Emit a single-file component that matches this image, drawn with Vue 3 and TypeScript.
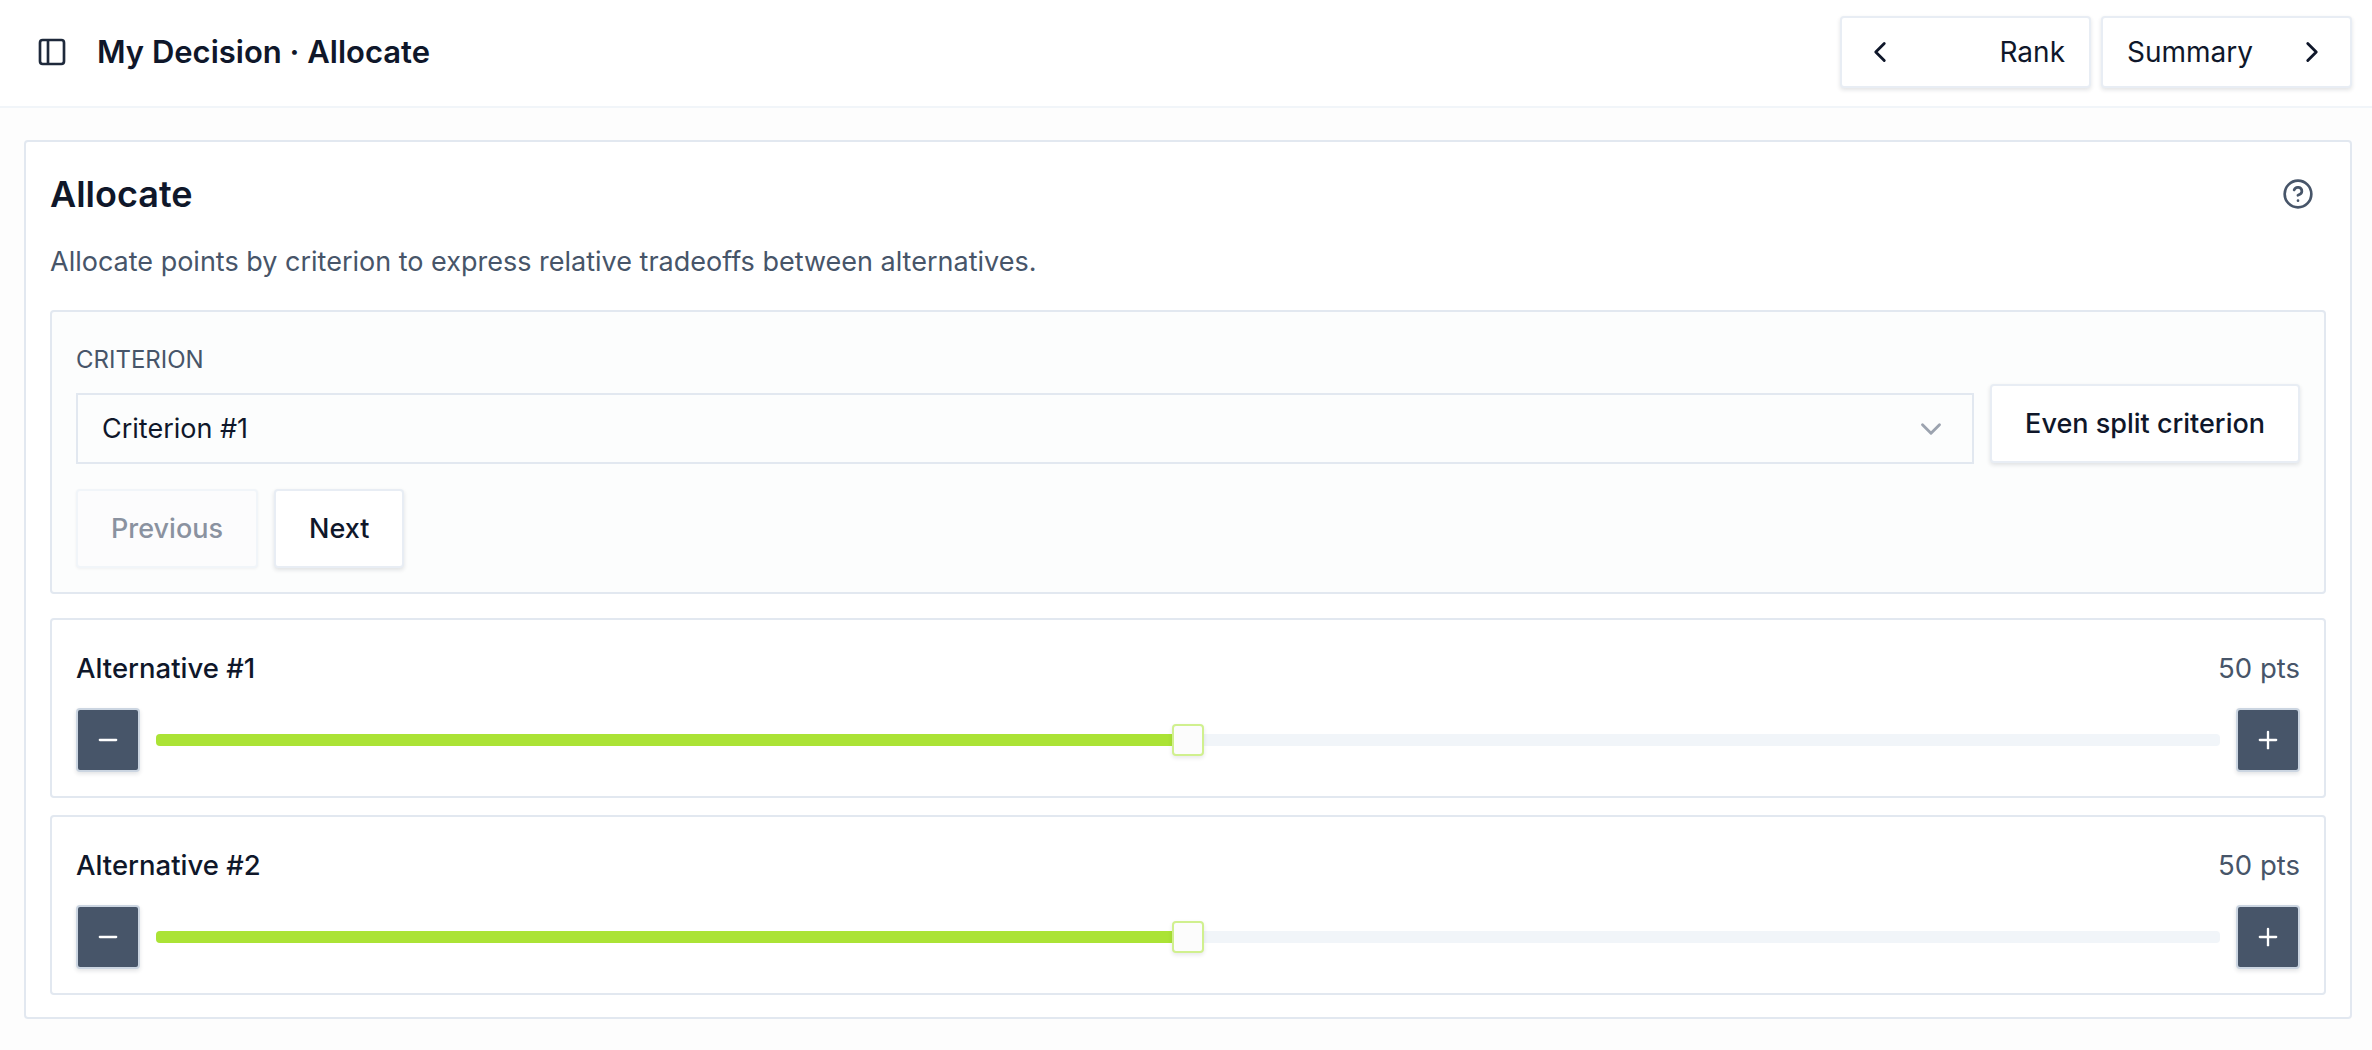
<script setup lang="ts">
interface Alternative {
  name: string
  points: number
}

const alternatives: Alternative[] = [
  { name: 'Alternative #1', points: 50 },
  { name: 'Alternative #2', points: 50 },
]
</script>

<template>
  <div class="page">
    <!-- Top bar -->
    <header class="topbar">
      <div class="topbar-left">
        <svg class="sidebar-icon" viewBox="0 0 24 24" fill="none" stroke="currentColor" stroke-width="2">
          <rect x="3" y="3" width="18" height="18" rx="2" />
          <path d="M9 3v18" />
        </svg>
        <h1 class="page-title">My Decision · Allocate</h1>
      </div>
      <nav class="topbar-nav">
        <button class="btn nav-btn">
          <svg class="chev" viewBox="0 0 24 24" fill="none" stroke="currentColor" stroke-width="2" stroke-linecap="round" stroke-linejoin="round">
            <path d="m15 18-6-6 6-6" />
          </svg>
          <span>Rank</span>
        </button>
        <button class="btn nav-btn">
          <span>Summary</span>
          <svg class="chev" viewBox="0 0 24 24" fill="none" stroke="currentColor" stroke-width="2" stroke-linecap="round" stroke-linejoin="round">
            <path d="m9 18 6-6-6-6" />
          </svg>
        </button>
      </nav>
    </header>

    <main class="content">
      <section class="card">
        <div class="card-head">
          <h2 class="card-title">Allocate</h2>
          <svg class="help-icon" viewBox="0 0 24 24" fill="none" stroke="currentColor" stroke-width="2" stroke-linecap="round" stroke-linejoin="round">
            <circle cx="12" cy="12" r="10" />
            <path d="M9.09 9a3 3 0 0 1 5.83 1c0 2-3 3-3 3" />
            <path d="M12 17h.01" />
          </svg>
        </div>
        <p class="card-desc">Allocate points by criterion to express relative tradeoffs between alternatives.</p>

        <!-- Criterion picker -->
        <div class="panel panel-tint">
          <div class="field-label">CRITERION</div>
          <div class="select-row">
            <div class="select">
              <span>Criterion #1</span>
              <svg class="select-chev" viewBox="0 0 24 24" fill="none" stroke="currentColor" stroke-width="2" stroke-linecap="round" stroke-linejoin="round">
                <path d="m6 9 6 6 6-6" />
              </svg>
            </div>
            <button class="btn action-btn">Even split criterion</button>
          </div>
          <div class="pager">
            <button class="btn action-btn disabled">Previous</button>
            <button class="btn action-btn">Next</button>
          </div>
        </div>

        <!-- Sliders -->
        <div class="alt-list">
          <div v-for="alt in alternatives" :key="alt.name" class="panel alt">
            <div class="alt-head">
              <span class="alt-name">{{ alt.name }}</span>
              <span class="alt-points">{{ alt.points }} pts</span>
            </div>
            <div class="alt-controls">
              <button class="step-btn">
                <svg viewBox="0 0 24 24" fill="none" stroke="currentColor" stroke-width="2" stroke-linecap="round">
                  <path d="M5 12h14" />
                </svg>
              </button>
              <div class="track">
                <div class="track-fill" :style="{ width: alt.points + '%' }"></div>
                <div class="thumb" :style="{ left: alt.points + '%' }"></div>
              </div>
              <button class="step-btn">
                <svg viewBox="0 0 24 24" fill="none" stroke="currentColor" stroke-width="2" stroke-linecap="round">
                  <path d="M5 12h14" />
                  <path d="M12 5v14" />
                </svg>
              </button>
            </div>
          </div>
        </div>
      </section>
    </main>
  </div>
</template>

<style>
html,
body {
  margin: 0;
  background: #fdfdfd;
}
</style>

<style scoped>
.page {
  min-height: 1050px;
  font-family: Inter, "Liberation Sans", sans-serif;
  color: #0f172a;
  background: #fdfdfd;
}

/* Top bar */
.topbar {
  height: 104px;
  box-sizing: content-box;
  display: flex;
  align-items: center;
  justify-content: space-between;
  padding: 0 20px 2px 36px;
  background: #fff;
  border-bottom: 2px solid #f1f5f9;
}

.topbar-left {
  display: flex;
  align-items: center;
  gap: 29px;
}

.sidebar-icon {
  width: 32px;
  height: 32px;
  color: #1e293b;
}

.page-title {
  margin: 0 0 2px;
  font-size: 31px;
  font-weight: 600;
}

.topbar-nav {
  display: flex;
  gap: 10px;
}

.btn {
  font-family: inherit;
  color: #0f172a;
  background: #fff;
  border: 2px solid #e8edf4;
  border-radius: 4px;
  box-shadow: 0 2px 4px rgba(15, 23, 42, 0.12);
}

.nav-btn {
  width: 251px;
  height: 72px;
  padding: 0 24px;
  display: flex;
  align-items: center;
  justify-content: space-between;
  font-size: 28px;
  font-weight: 400;
}

.chev {
  width: 34px;
  height: 34px;
  margin: 0 -3px;
}

/* Main card */
.content {
  padding: 32px 20px 32px 24px;
}

.card {
  border: 2px solid #e2e8f0;
  border-radius: 4px;
  padding: 28px 24px 22px;
  background: #fff;
  display: flex;
  flex-direction: column;
  gap: 24px;
}

.card-head {
  display: flex;
  align-items: center;
  justify-content: space-between;
  height: 48px;
}

.card-title {
  margin: 0;
  font-size: 36px;
  font-weight: 600;
}

.help-icon {
  width: 32px;
  height: 32px;
  margin-right: 12px;
  color: #475569;
}

.card-desc {
  margin: 0 0 4px;
  font-size: 27px;
  color: #475569;
  line-height: 40px;
}

.panel {
  border: 2px solid #e2e8f0;
  border-radius: 4px;
  padding: 24px;
}

.panel-tint {
  background: #fcfdfd;
}

.field-label {
  font-size: 24px;
  color: #475569;
  line-height: 32px;
  margin-top: 8px;
}

.select-row {
  display: flex;
  align-items: flex-start;
  gap: 16px;
  margin-top: 8px;
}

.select {
  flex: 1;
  height: 71px;
  margin-top: 9px;
  box-sizing: border-box;
  border: 2px solid #e2e8f0;
  display: flex;
  align-items: center;
  justify-content: space-between;
  padding: 0 24px;
  font-size: 27px;
}

.select-chev {
  width: 34px;
  height: 34px;
  color: #9ca3af;
}

.action-btn {
  height: 79px;
  padding: 0 33px;
  font-size: 27px;
  font-weight: 500;
}

.pager {
  display: flex;
  gap: 16px;
  margin-top: 25px;
}

.disabled {
  color: #8a92a0;
  background: #fcfcfd;
  border-color: #f1f5f9;
  box-shadow: 0 1px 3px rgba(15, 23, 42, 0.05);
}

/* Alternative sliders */
.alt-list {
  display: flex;
  flex-direction: column;
  gap: 17px;
}

.alt {
  background: #fff;
}

.alt-head {
  display: flex;
  justify-content: space-between;
  align-items: center;
  line-height: 40px;
  font-size: 27.5px;
  margin-top: 4px;
}

.alt-name {
  font-weight: 500;
}

.alt-points {
  color: #475569;
}

.alt-controls {
  display: flex;
  align-items: center;
  gap: 16px;
  margin-top: 20px;
}

.step-btn {
  width: 64px;
  height: 64px;
  padding: 0;
  flex: none;
  display: flex;
  align-items: center;
  justify-content: center;
  color: #fff;
  background: #475569;
  border: 2px solid #cbd5e1;
  border-radius: 4px;
  box-shadow: 0 2px 4px rgba(15, 23, 42, 0.12);
}

.step-btn svg {
  width: 28px;
  height: 28px;
}

.track {
  position: relative;
  flex: 1;
  height: 12px;
  background: #f1f5f9;
  border-radius: 4px;
}

.track-fill {
  height: 100%;
  background: #abe335;
  border-radius: 4px 0 0 4px;
}

.thumb {
  position: absolute;
  top: 50%;
  width: 32px;
  height: 32px;
  box-sizing: border-box;
  transform: translate(-50%, -50%);
  background: #fcfcfc;
  border: 2px solid #d0f08e;
  border-radius: 4px;
  box-shadow: 0 2px 4px rgba(15, 23, 42, 0.1);
}
</style>
